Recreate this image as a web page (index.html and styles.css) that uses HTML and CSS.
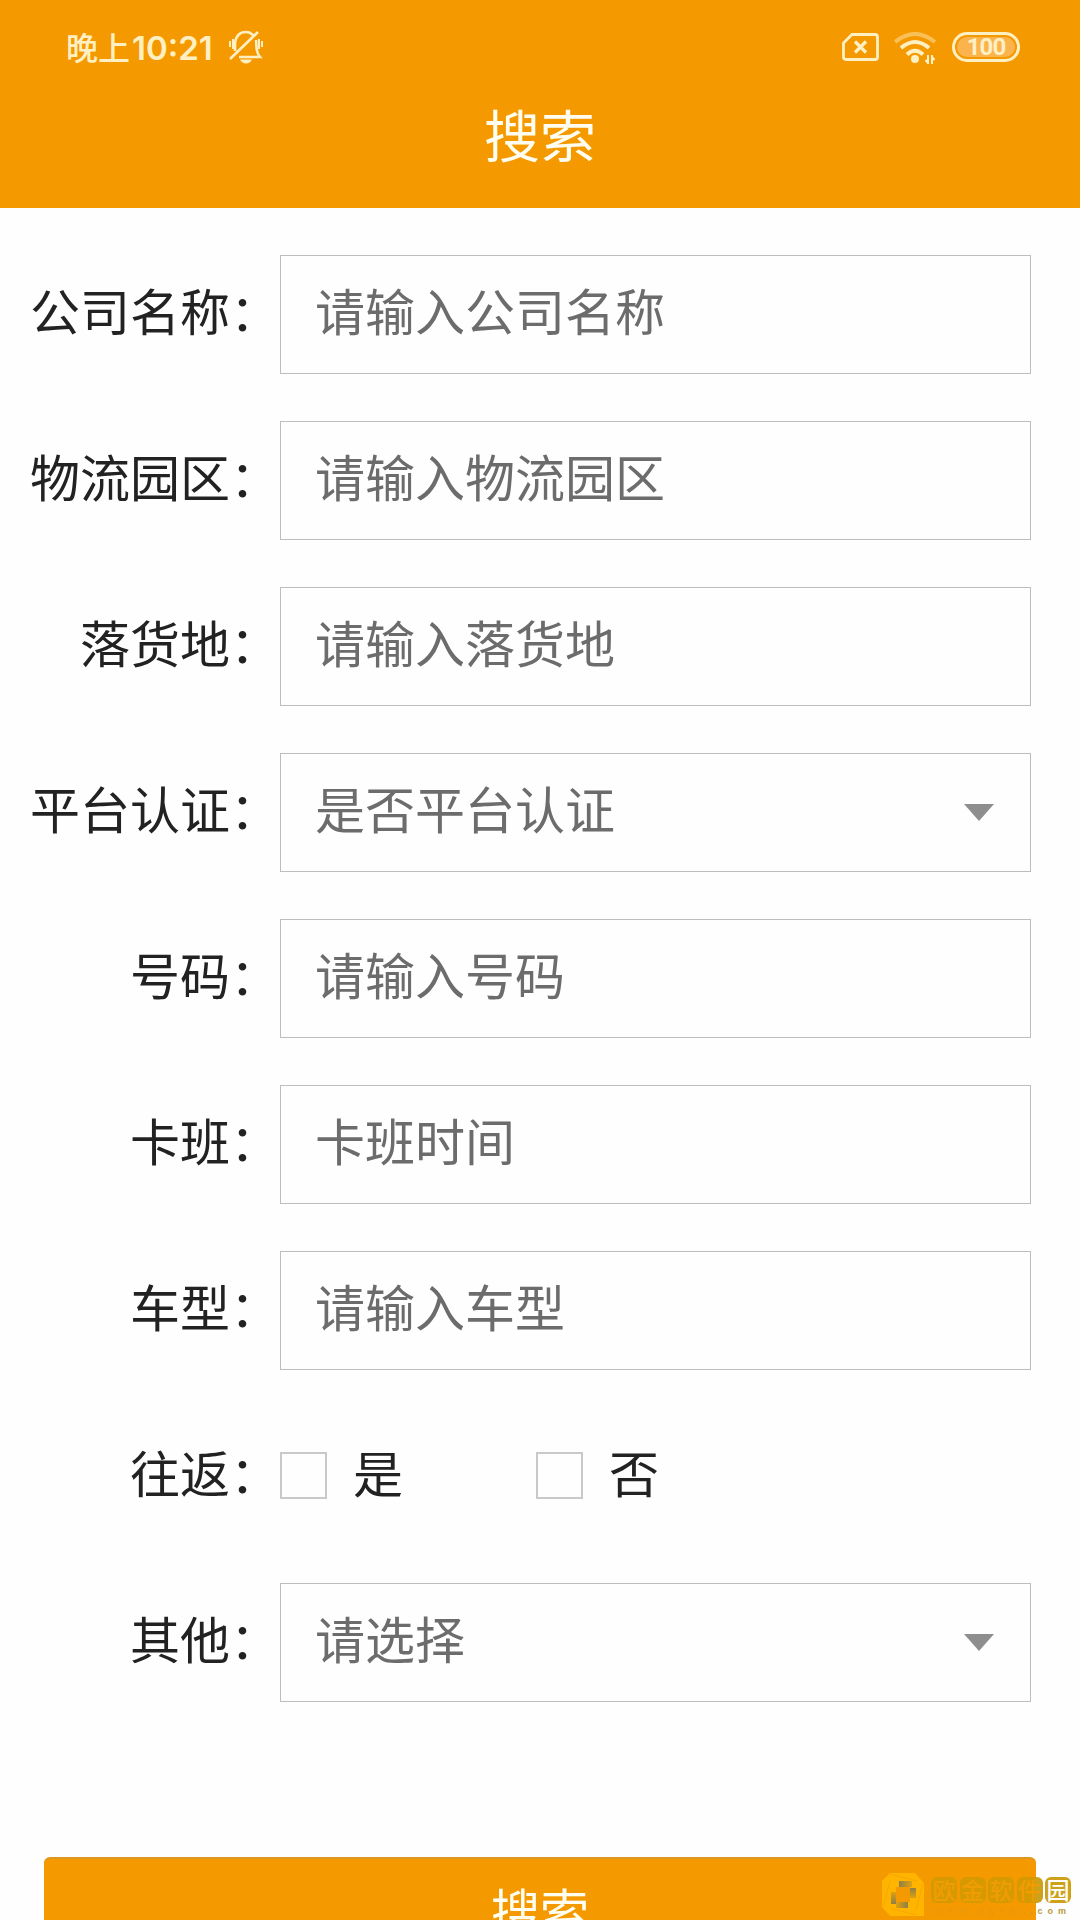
FILE: index.html
```html
<!DOCTYPE html>
<html lang="zh-CN">
<head>
<meta charset="utf-8">
<title>搜索</title>
<link rel="stylesheet" href="styles.css">
</head>
<body>
<div class="screen">
  <header class="header">
    <div class="status">
      <div class="status-left">
        <span class="period">晚上</span><span class="clock">10:21</span>
        <svg class="bell" width="36" height="34" viewBox="0 0 36 34" fill="none" stroke="currentColor" stroke-width="2.6">
          <path d="M7 21V13C8 6 12 2 18 2C21 2 23 3 25 5M28 10C29 16 27 21 32 27H11M2 29L30 2"/>
          <path d="M2 11v6M5 9v10M31 9v10M34 11v6" stroke-width="2"/>
          <path d="M12 29.500h12q-2 4-6 4t-6-4z" fill="currentColor" stroke="none"/>
        </svg>
      </div>
      <div class="status-right">
        <svg width="37" height="28" viewBox="0 0 37 28" fill="none" stroke="currentColor" stroke-width="2.800">
          <path d="M10 1.500H33Q35.500 1.500 35.500 4V24Q35.500 26.500 33 26.500H4Q1.500 26.500 1.500 24V10Z"/>
          <path d="M13 8.500l11 11M24 8.500l-11 11" stroke-width="3.2"/>
        </svg>
        <svg class="wifi" width="43" height="34" viewBox="0 0 43 34" fill="none" stroke="currentColor" stroke-width="4">
          <path d="M1 10Q21 -6 41 10" opacity=".45"/>
          <path d="M7 16Q21 4 35 16M13 22.500Q21 15 29 22.500"/>
          <circle cx="21" cy="27" r="4" fill="currentColor" stroke="none"/>
          <path d="M34 23v9M38 23v9M31.500 28l2.500 3M40.500 28l-2.500-3" stroke-width="2"/>
        </svg>
        <span class="battery"><span class="battery-level">100</span></span>
      </div>
    </div>
    <h1 class="title">搜索</h1>
  </header>
  <main class="form">
    <div class="row"><span class="label">公司名称：</span><div class="field">请输入公司名称</div></div>
    <div class="row"><span class="label">物流园区：</span><div class="field">请输入物流园区</div></div>
    <div class="row"><span class="label">落货地：</span><div class="field">请输入落货地</div></div>
    <div class="row"><span class="label">平台认证：</span><div class="field">是否平台认证<span class="arrow"></span></div></div>
    <div class="row"><span class="label">号码：</span><div class="field">请输入号码</div></div>
    <div class="row"><span class="label">卡班：</span><div class="field">卡班时间</div></div>
    <div class="row"><span class="label">车型：</span><div class="field">请输入车型</div></div>
    <div class="row">
      <span class="label">往返：</span>
      <div class="options">
        <div class="option"><span class="box"></span><span class="option-text">是</span></div>
        <div class="option"><span class="box"></span><span class="option-text">否</span></div>
      </div>
    </div>
    <div class="row"><span class="label">其他：</span><div class="field">请选择<span class="arrow"></span></div></div>
  </main>
  <div class="submit"><span class="submit-text">搜索</span></div>
  <div class="watermark">
    <svg width="44" height="44" viewBox="0 0 44 44">
      <defs>
        <linearGradient id="fade-right"><stop offset="0" stop-color="#8d8146"/><stop offset="1" stop-color="#e0a010"/></linearGradient>
        <linearGradient id="fade-left"><stop offset="0" stop-color="#e0a010"/><stop offset="1" stop-color="#8d8146"/></linearGradient>
        <linearGradient id="fade-up" x2="0" y2="1"><stop offset="0" stop-color="#e0a010"/><stop offset="1" stop-color="#8d8146"/></linearGradient>
        <linearGradient id="fade-down" x2="0" y2="1"><stop offset="0" stop-color="#8d8146"/><stop offset="1" stop-color="#e0a010"/></linearGradient>
      </defs>
      <path d="M9 0H34L43 10V43H9L1 34V8Z" fill="#ffb400"/>
      <path d="M15 14H29V29H15Z" fill="#f59900"/>
      <path d="M9 1L36 8M42 10L35 37M35 42L9 35M2 34L9 8" fill="none" stroke="#f5a300" stroke-width=".8"/>
      <path d="M18 8H31V14H18Z" fill="url(#fade-right)"/>
      <path d="M29 15H35V25H29Z" fill="url(#fade-down)"/>
      <path d="M10 19H15V31H10Z" fill="url(#fade-up)"/>
      <path d="M15 29H27V35H15Z" fill="url(#fade-left)"/>
    </svg>
    <div class="brand">
      <div class="tiles"><span class="tile">欧</span><span class="tile">金</span><span class="tile">软</span><span class="tile tile-edge">件</span><span class="tile tile-light">园</span></div>
      <div class="domain"><span class="domain-faint">www.ogeou</span><span>.com</span></div>
    </div>
  </div>
</div>
</body>
</html>
```
FILE: styles.css
```css
* { box-sizing: border-box; }
body { margin: 0; background: #fefefe; font-family: "Noto Sans CJK SC", sans-serif; }
.screen { position: relative; width: 1080px; height: 1920px; overflow: hidden; display: flex; flex-direction: column; }
.header { height: 208px; background: #f59900; flex: none; }
.status { height: 94px; padding: 0 60px 0 66px; display: flex; justify-content: space-between; align-items: center; color: #fff0c4; }
.status-left, .status-right { display: flex; align-items: center; }
.period { font-size: 32px; font-weight: 500; line-height: 40px; margin-top: -3px; }
.clock { font-family: Inter, sans-serif; font-size: 33px; font-weight: 600; line-height: 40px; margin: 2px 0 0 2px; }
.bell { margin-left: 15px; }
.status-right { gap: 15px; }
.wifi { margin-top: 4px; }
.battery { width: 68px; height: 30px; border: 3px solid #fff0c4; border-radius: 15px; padding: 2px; display: flex; }
.battery-level { flex: 1; border-radius: 10px; background: #fbb44d; font: bold 24px/21px Roboto, sans-serif; letter-spacing: -1px; text-align: center; }
.title { margin: 0; font-size: 56px; font-weight: 400; line-height: 78px; text-align: center; color: #fffef0; }
.form { padding: 47px 49px 0 30px; display: flex; flex-direction: column; gap: 47px; }
.row { display: flex; height: 119px; font-size: 50px; line-height: 72px; }
.label { width: 250px; flex: none; text-align: right; white-space: nowrap; color: #222; padding-top: 18px; }
.field { flex: 1; border: 1px solid #bdbdbd; padding: 17px 36px 0 34px; display: flex; justify-content: space-between; color: #6c6c6c; }
.arrow { width: 30px; height: 17px; margin-top: 33px; background: #8e8e8e; clip-path: polygon(0 0, 100% 0, 50% 100%); }
.options { display: flex; color: #222; }
.option { width: 256px; display: flex; gap: 26px; }
.box { width: 47px; height: 47px; margin-top: 35px; border: 2px solid #c9c9c9; }
.option-text { padding-top: 18px; }
.submit { flex: none; height: 140px; margin: 155px 44px 0; background: #f59900; border-top: 2px solid #dc9720; border-radius: 6px; color: #fffef0; font-size: 49px; line-height: 72px; text-align: center; padding-top: 14px; }
.watermark { position: absolute; left: 881px; top: 1873px; display: flex; gap: 6px; }
.brand { padding-top: 4px; }
.tiles { display: flex; gap: 2.500px; }
.tile { width: 26px; height: 26px; border-radius: 6px; background: #d69a00; color: #f09c05; font-size: 23px; font-weight: 500; line-height: 25px; text-align: center; }
.tile-edge { background: linear-gradient(90deg, #d69a00 68%, #cda21a 68%); }
.tile-light { color: #fff; background: #cda21a; }
.domain { display: flex; justify-content: flex-end; margin-top: 3px; font: bold 9px/10px "Liberation Sans", sans-serif; letter-spacing: 5px; color: #b99a3a; }
.domain-faint { color: #eb980c; }
```
